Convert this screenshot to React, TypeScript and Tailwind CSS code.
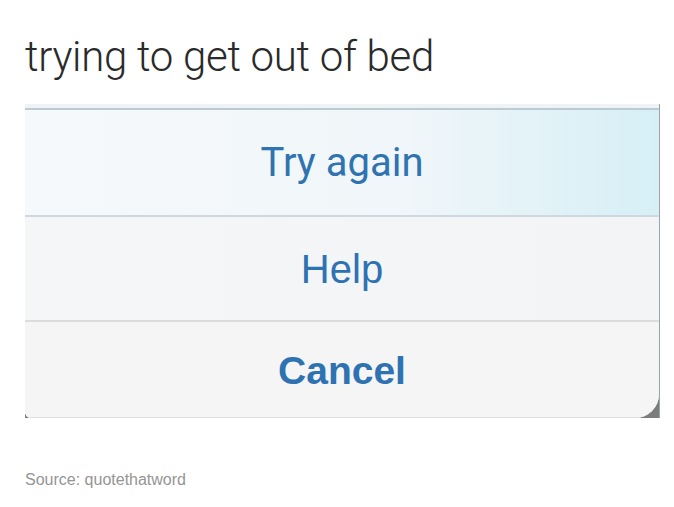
import React from 'react';

const Row: React.FC<{ label: string; className?: string; textClass?: string }> = ({ label, className, textClass }) => (
  <div className={`flex items-center justify-center ${className || ''}`}>
    <span className={textClass}>{label}</span>
  </div>
);

export default function App() {
  return (
    <div className="min-h-[507px] w-[674px] bg-white">
      <h1 className="pl-[25px] pt-[32px] text-[42px] font-light leading-[50px] tracking-[-0.3px] text-[#2a2a2a] [font-family:Roboto,'Liberation_Sans',sans-serif]">
        trying to get out of bed
      </h1>

      <div className="ml-[25px] mt-[22px] w-[635px] bg-[#7d7d7d] border-r border-[#9aa5aa]">
        <div className="flex flex-col overflow-hidden rounded-bl-[6px] rounded-br-[24px] bg-[#f5f5f5]">
          <div className="h-[4px] bg-[#eef3f5]" />
          <Row
            label="Try again"
            className="h-[107px] border-t-2 border-[#bccbd2] bg-gradient-to-r from-[#f6f9fb] via-[#f0f6f9] via-60% to-[#d6eff6]"
            textClass="text-[40px] text-[#2f73b0] [font-family:Roboto,sans-serif]"
          />
          <Row
            label="Help"
            className="h-[105px] border-t-2 border-[#cfd8e0] bg-gradient-to-r from-[#f5f6f8] to-[#f2f4f6]"
            textClass="text-[40px] text-[#2e72b2] [font-family:'Liberation_Sans',Arial,sans-serif]"
          />
          <Row
            label="Cancel"
            className="h-[98px] border-t-2 border-[#dcdcdc] border-b border-b-[#e0e0e0] bg-[#f5f5f5]"
            textClass="mt-[3px] text-[39px] font-bold text-[#2e72b2] [font-family:'Liberation_Sans',Arial,sans-serif]"
          />
        </div>
      </div>

      <p className="pl-[25px] pt-[50px] text-[16px] text-[#959595] [font-family:'Liberation_Sans',Arial,sans-serif]">
        Source: quotethatword
      </p>
    </div>
  );
}
